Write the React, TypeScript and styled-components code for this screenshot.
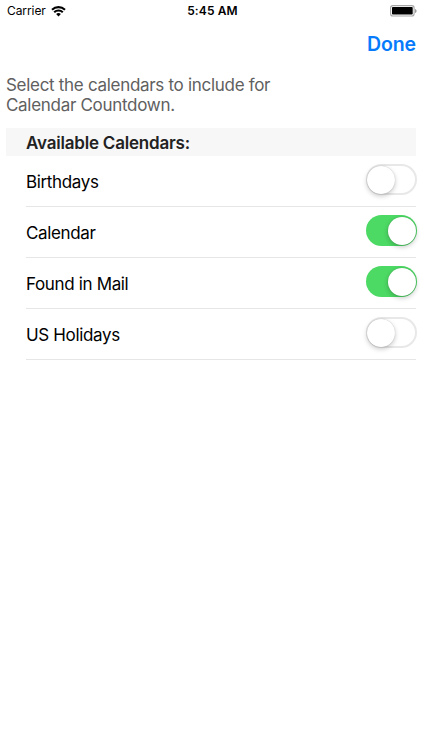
import React from "react";
import styled, { createGlobalStyle } from "styled-components";

const Global = createGlobalStyle`
  * { box-sizing: border-box; }
  body { margin: 0; background: #fff; font-family: Inter, sans-serif; color: #000; }
`;
const Screen = styled.main`
  width: 422px; height: 750px; background: #fff; overflow: hidden;
`;
const StatusBar = styled.header`
  height: 22px; display: grid; grid-template-columns: 1fr auto 1fr;
  align-items: center; padding: 0 5px 0 7px; font-size: 12px; line-height: 22px;
`;
const Carrier = styled.div`
  display: flex; align-items: center; gap: 5px; letter-spacing: -0.08px;
`;
const Time = styled.div`font-weight: 600; letter-spacing: 0.12px; padding-left: 1px;`;
const BatterySlot = styled.div`display: flex; justify-content: flex-end;`;
const NavBar = styled.nav`
  height: 44px; display: flex; align-items: center; justify-content: flex-end; padding-right: 6px;
`;
const DoneButton = styled.button`
  border: 0; padding: 0; background: none; color: #077bfb;
  font: 600 19.5px/24px Inter, sans-serif; letter-spacing: -0.1px;
`;
const Intro = styled.p`
  margin: 9px 0 0 6px; font-size: 17px; line-height: 20px; color: #606060; letter-spacing: -0.3px;
`;
const List = styled.section`margin: 13px 6px 0 6px;`;
const SectionTitle = styled.h2`
  margin: 0; height: 28px; padding-left: 20px; background: #f7f7f7; color: #222;
  font-size: 17px; line-height: 30px; font-weight: 600; letter-spacing: -0.2px;
`;
const Row = styled.div`
  height: 51px; margin-left: 20px; display: flex; justify-content: space-between;
  border-bottom: 1px solid #e6e6e6;
`;
const Label = styled.span`font-size: 17px; line-height: 53px; letter-spacing: -0.35px;`;
const Switch = styled.button<{ $on: boolean }>`
  flex: none; width: 51px; height: 31px; margin: 8px -1px 0 0; padding: 0 1px;
  display: flex; align-items: center; justify-content: ${p => (p.$on ? "flex-end" : "flex-start")};
  border: 0; border-radius: 16px;
  background: ${p => (p.$on ? "#4cd964" : "#fff")};
  box-shadow: ${p => (p.$on ? "none" : "inset 0 0 0 2px #e8e8e8")};
`;
const Knob = styled.span`
  width: 28px; height: 28px; margin-top: 1px; border-radius: 50%; background: #fff;
  box-shadow: 0 2px 5px rgba(0,0,0,.22), 0 0 1px rgba(0,0,0,.25);
`;

const calendars = [
  { name: "Birthdays", on: false },
  { name: "Calendar", on: true },
  { name: "Found in Mail", on: true },
  { name: "US Holidays", on: false },
];

export default function App() {
  return (
    <Screen>
      <Global />
      <StatusBar>
        <Carrier>
          Carrier
          <svg width="15" height="11" viewBox="0 0 15 11">
            <path d="M1 3.700a9.500 9.500 0 0 1 13 0M3.200 6.200a6.200 6.200 0 0 1 8.600 0" fill="none" stroke="#000" strokeWidth="2.100" />
            <path d="M5.100 8.100a3.500 3.500 0 0 1 4.800 0L7.500 10.500z" />
          </svg>
        </Carrier>
        <Time>5:45 AM</Time>
        <BatterySlot>
          <svg width="27" height="12" viewBox="0 0 27 12">
            <rect x=".6" y=".6" width="23.500" height="10.400" rx="2.300" fill="none" stroke="#a6a6a6" strokeWidth="1.100" />
            <rect x="2" y="2" width="20.700" height="7.600" rx=".8" />
            <path d="M25.100 3.900v4c.9-.3 1.400-1 1.400-2s-.5-1.700-1.400-2z" fill="#8c8c8c" />
          </svg>
        </BatterySlot>
      </StatusBar>
      <NavBar><DoneButton>Done</DoneButton></NavBar>
      <Intro>Select the calendars to include for<br />Calendar Countdown.</Intro>
      <List>
        <SectionTitle>Available Calendars:</SectionTitle>
        {calendars.map(c => (
          <Row key={c.name}>
            <Label>{c.name}</Label>
            <Switch $on={c.on} role="switch" aria-checked={c.on} aria-label={c.name}><Knob /></Switch>
          </Row>
        ))}
      </List>
    </Screen>
  );
}
